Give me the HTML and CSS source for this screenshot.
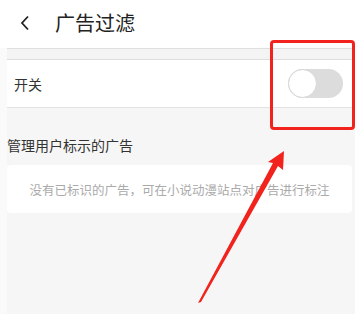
FILE: index.html
```html
<!DOCTYPE html>
<html lang="zh-CN">
<head>
  <meta charset="UTF-8">
  <meta name="viewport" content="width=device-width, initial-scale=1.0">
  <title>广告过滤</title>
  <link rel="stylesheet" href="styles.css">
</head>
<body>
  <header class="top-bar">
    <svg class="back-icon" width="10" height="16" viewBox="0 0 10 16">
      <polyline points="8,1.5 2,8 8,14.5" fill="none" stroke="#222" stroke-width="1.8"/>
    </svg>
    <h1 class="title">广告过滤</h1>
  </header>

  <main class="page">
    <div class="spacer"></div>

    <div class="switch-row">
      <span class="label">开关</span>
      <span class="toggle"><span class="knob"></span></span>
    </div>

    <h2 class="section-title">管理用户标示的广告</h2>
    <div class="empty-card">没有已标识的广告，可在小说动漫站点对广告进行标注</div>
  </main>

  <!-- annotation drawn over the screenshot -->
  <div class="highlight-box"></div>
  <svg class="arrow" width="355" height="314" viewBox="0 0 355 314">
    <polygon points="284,151 283,170 278,166 201,302 198,303 273,163 268,162" fill="#f2231d"/>
  </svg>
</body>
</html>
```

FILE: styles.css
```css
/* Global Styles */
body {
  margin: 0;
  width: 355px;
  height: 314px;
  overflow: hidden;
  position: relative;
  background-color: #fafafa;
  font-family: 'Noto Sans CJK SC', 'Noto Sans', sans-serif;
  color: #333;
}

/* Top Bar */
.top-bar {
  height: 48px;
  background: #ffffff;
  display: flex;
  align-items: center;
  padding-left: 20px;
}

.back-icon {
  margin-top: -2px;
}

.title {
  margin: 0 0 0 25px;
  font-size: 20px;
  font-weight: normal;
  color: #222;
  line-height: 1;
  margin-top: -2px;
}

/* Page Content */
.page {
  margin-left: 7px;
  background-color: #f6f6f6;
  height: 266px;
}

.spacer {
  height: 10px;
  background: #f4f4f4;
  border-top: 1px solid #dedede;
  border-bottom: 1px solid #dedede;
}

.switch-row {
  height: 47px;
  background: #ffffff;
  border-bottom: 1px solid #e2e2e2;
  display: flex;
  align-items: center;
  justify-content: space-between;
  padding: 0 12px 0 7px;
}

.label {
  font-size: 14px;
  color: #333;
}

.toggle {
  width: 55px;
  height: 29px;
  border-radius: 15px;
  background: #dcdcdc;
  display: flex;
  margin-top: -1px;
}

.knob {
  width: 27px;
  height: 27px;
  border-radius: 50%;
  background: #ffffff;
  border: 1px solid #d6d6d6;
}

.section-title {
  margin: 0;
  padding: 27px 0 10px;
  font-size: 14px;
  font-weight: normal;
  color: #333;
  line-height: 20px;
}

.empty-card {
  margin-right: 3px;
  height: 48px;
  background: #ffffff;
  border-radius: 4px;
  display: flex;
  align-items: center;
  justify-content: center;
  font-size: 12.5px;
  color: #aaa;
  padding-top: 1px;
  box-sizing: border-box;
}

/* Annotation Overlay */
.highlight-box {
  position: absolute;
  left: 270px;
  top: 40px;
  width: 79px;
  height: 84px;
  border: 3px solid #f2231d;
  border-radius: 4px;
}

.arrow {
  position: absolute;
  left: 0;
  top: 0;
}
```
